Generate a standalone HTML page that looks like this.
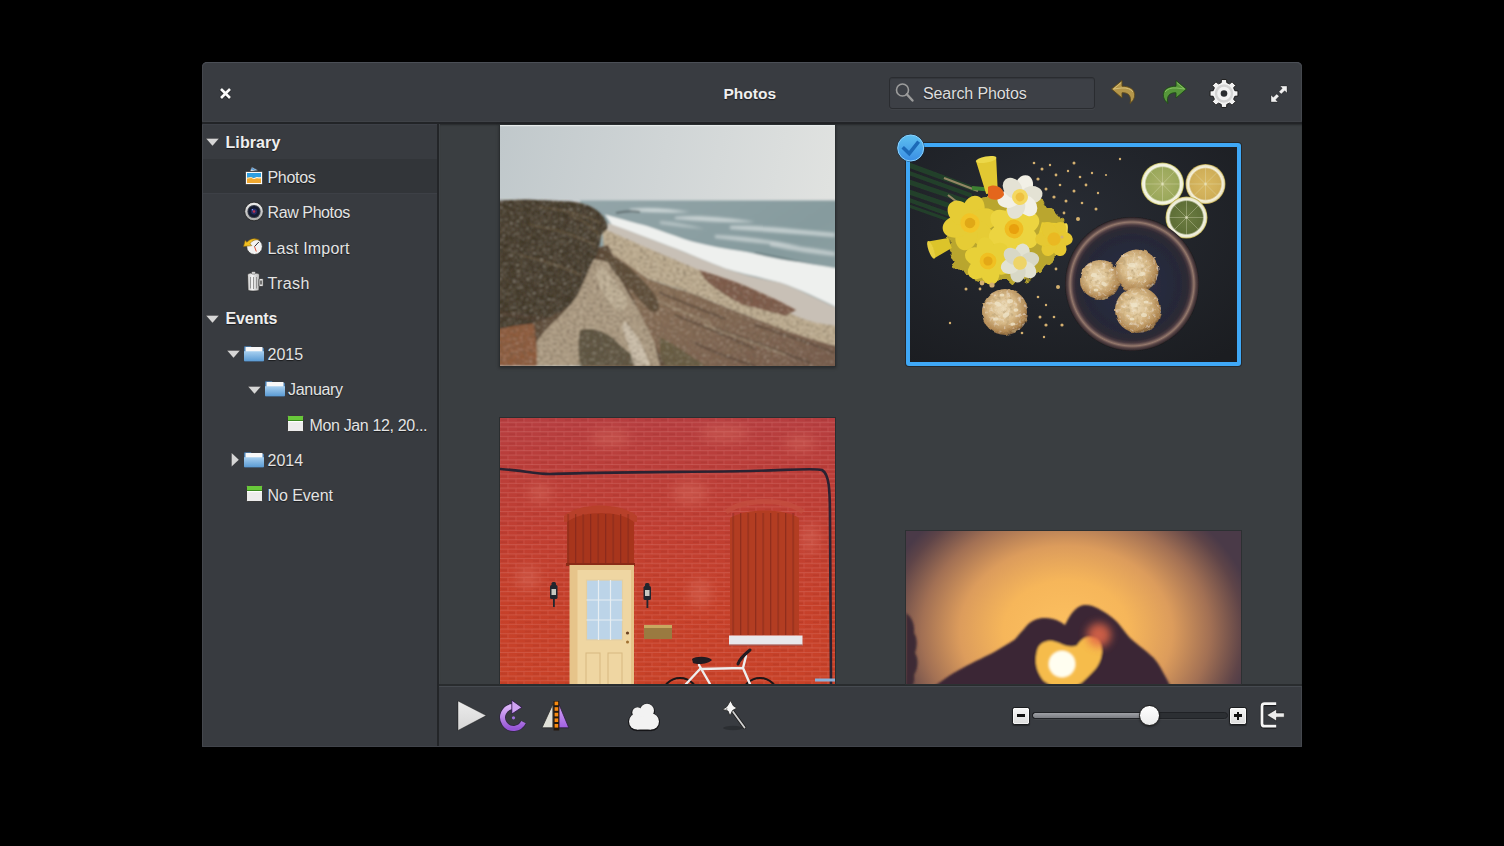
<!DOCTYPE html>
<html><head><meta charset="utf-8">
<style>
*{margin:0;padding:0;box-sizing:border-box}
html,body{width:1504px;height:846px;background:#000;overflow:hidden;font-family:"Liberation Sans",sans-serif;position:relative}
.a{position:absolute}
#win{left:202px;top:62px;width:1100px;height:685px;background:#393c41;border-radius:5px 5px 0 0;overflow:hidden}
#hb{left:202px;top:62px;width:1100px;height:60px;background:#393c41;border-top:1px solid #4b4f56;border-radius:5px 5px 0 0;box-shadow:inset 1px 0 0 #44474d,inset -1px 0 0 #44474d}
#hbl{left:202px;top:121px;width:1100px;height:1px;background:#3f4247}
#hbd{left:202px;top:122px;width:1100px;height:2px;background:#222427}
#side{left:202px;top:124px;width:235px;height:623px;background:#383b40;box-shadow:inset 1px 0 0 #44474d;border-top:1px solid #3d4047}
#sel{left:203px;top:159px;width:234px;height:35px;background:#323539;border-bottom:1px solid #3d4046}
#sep{left:437px;top:124px;width:2px;height:623px;background:#232528}
#sepl{left:439px;top:124px;width:1px;height:561px;background:#3e4245}
#content{left:440px;top:124px;width:862px;height:560px;background:#3a3e41;box-shadow:inset 0 2px 2px -1px rgba(0,0,0,.35)}
#tbd{left:439px;top:684px;width:863px;height:2px;background:#292c2e}
#tb{left:439px;top:686px;width:863px;height:61px;background:#383b40;border-top:1px solid #464a50;box-shadow:inset -1px 0 0 #44474d}
.t{position:absolute;color:#e4e4e4;font-size:16px;line-height:16px;white-space:nowrap;text-shadow:0 1px 1px rgba(0,0,0,.55)}
.b{font-weight:bold;color:#efefef;font-size:16px;line-height:16px}
svg{position:absolute;overflow:visible}
svg.ph{overflow:hidden}
</style></head><body>
<div class="a" id="win"></div>
<div class="a" id="hb"></div>
<div class="a" id="hbl"></div>
<div class="a" id="hbd"></div>
<div class="a" id="side"></div>
<div class="a" id="sel"></div>
<div class="a" id="sep"></div>
<div class="a" id="sepl"></div>
<div class="a" id="content"></div>
<div class="a" id="tbd"></div>
<div class="a" id="tb"></div>

<div class="a" style="left:202px;top:746px;width:1100px;height:1px;background:#41444b"></div>
<!-- SIDEBAR -->
<svg style="left:205px;top:137px" width="16" height="10"><path d="M1 1.5h13l-6.5 7.5z" fill="#d6d6d6" stroke="rgba(0,0,0,.3)" stroke-width=".7"/></svg>
<svg style="left:205px;top:314px" width="16" height="10"><path d="M1 1.5h13l-6.5 7.5z" fill="#d6d6d6" stroke="rgba(0,0,0,.3)" stroke-width=".7"/></svg>
<svg style="left:226px;top:349px" width="16" height="10"><path d="M1 1.5h13l-6.5 7.5z" fill="#d6d6d6" stroke="rgba(0,0,0,.3)" stroke-width=".7"/></svg>
<svg style="left:247px;top:385px" width="16" height="10"><path d="M1 1.5h13l-6.5 7.5z" fill="#d6d6d6" stroke="rgba(0,0,0,.3)" stroke-width=".7"/></svg>
<svg style="left:230px;top:452px" width="10" height="16"><path d="M1.5 0.8v14l7.5-7z" fill="#d6d6d6" stroke="rgba(0,0,0,.3)" stroke-width=".7"/></svg>
<div class="t b" style="left:225.5px;top:135.0px;letter-spacing:0.1px">Library</div>
<div class="t" style="left:267.5px;top:170.3px;letter-spacing:-0.3px">Photos</div>
<div class="t" style="left:267.5px;top:204.7px;letter-spacing:-0.4px">Raw Photos</div>
<div class="t" style="left:267.5px;top:241.0px;letter-spacing:0.2px">Last Import</div>
<div class="t" style="left:267.5px;top:276.4px;letter-spacing:0.4px">Trash</div>
<div class="t b" style="left:225.5px;top:310.7px;letter-spacing:-0.1px">Events</div>
<div class="t" style="left:267.5px;top:347.0px;letter-spacing:0px">2015</div>
<div class="t" style="left:288px;top:382.4px;letter-spacing:-0.3px">January</div>
<div class="t" style="left:309.5px;top:417.7px;letter-spacing:-0.35px">Mon Jan 12, 20...</div>
<div class="t" style="left:267.5px;top:453.1px;letter-spacing:0px">2014</div>
<div class="t" style="left:267.5px;top:488.4px;letter-spacing:-0.05px">No Event</div>
<svg width="0" height="0" style="position:absolute"><defs>
<linearGradient id="fg" x1="0" y1="0" x2="0" y2="1"><stop offset="0" stop-color="#a8d0f0"/><stop offset="1" stop-color="#5c9cd4"/></linearGradient>
</defs></svg>

<!-- photos icon -->
<svg style="left:244px;top:166px" width="20" height="20" viewBox="0 0 20 20">
 <path d="M6 5.5 L8 1.2 L13.5 4.2 Z" fill="#e8f0f8" stroke="#5a6a7a" stroke-width=".6"/>
 <path d="M7.2 3.6 L8.3 2 L12 4.2 Z" fill="#3a8ad0"/>
 <rect x="1.5" y="5.5" width="17" height="13" rx="1" fill="#fafafa" stroke="#2a2a2a" stroke-width=".7"/>
 <rect x="3" y="7" width="14" height="10" fill="#f0a830"/>
 <path d="M3 7h14v4.5c-2 .8-3-.6-5 .2s-3 .6-4-.2-3 .4-5 .2z" fill="#2e9ee0"/>
 <path d="M3 11.7c2 .2 3-1 5-.2s2 .6 4-.2 3 .6 5-.2v1.2c-2 .8-3-.6-5 .2s-3 .6-4-.2-3 .4-5 .2z" fill="#fff4d8"/>
</svg>
<!-- raw lens -->
<svg style="left:244px;top:201px" width="20" height="21" viewBox="0 0 20 21">
 <defs><linearGradient id="lrg" x1="0" y1="0" x2="0" y2="1"><stop offset="0" stop-color="#f0f0f0"/><stop offset="1" stop-color="#a8a8a8"/></linearGradient></defs>
 <circle cx="10" cy="10.5" r="9.3" fill="url(#lrg)" stroke="#1a1a1a" stroke-width=".7"/>
 <circle cx="10" cy="10.5" r="6.6" fill="#3a3e48"/>
 <circle cx="10" cy="10.5" r="5.6" fill="#141a30"/>
 <circle cx="10" cy="10.5" r="3" fill="#262e66"/>
 <circle cx="10" cy="10.5" r="1.3" fill="#c03050"/>
 <circle cx="8.4" cy="8.8" r=".7" fill="#8aa0ff"/>
</svg>
<!-- last import -->
<svg style="left:242px;top:236px" width="22" height="21" viewBox="0 0 22 21">
 <circle cx="12.5" cy="10.6" r="7.9" fill="#f2f2f2" stroke="#2a2a2a" stroke-width=".8"/>
 <path d="M12.5 10.6 L16.8 6" stroke="#1a1a1a" stroke-width=".9" fill="none"/>
 <path d="M12.5 10.6 L14.3 15.5" stroke="#e04020" stroke-width=".9" fill="none"/>
 <path d="M1.5 10.5 L3.2 4.5 L5 6.3 C8 2.5 13 1.6 17.2 4 C14 3.2 10 4.2 8 7.8 L9.8 9.6 Z" fill="#f2c020" stroke="#8a6410" stroke-width=".6" stroke-linejoin="round"/>
</svg>
<!-- trash -->
<svg style="left:245px;top:271px" width="21" height="22" viewBox="0 0 21 22">
 <defs><linearGradient id="trg" x1="0" y1="0" x2="1" y2="0"><stop offset="0" stop-color="#c8c8c8"/><stop offset=".4" stop-color="#f4f4f4"/><stop offset="1" stop-color="#b8b8b8"/></linearGradient></defs>
 <path d="M2.5 4.5 C2.5 2.5 4 2 8.5 2 C13 2 14.5 2.5 14.5 4.5 L14 18.5 C14 19.6 12.5 20 8.5 20 C4.5 20 3 19.6 3 18.5 Z" fill="url(#trg)" stroke="#2a2a2a" stroke-width=".7"/>
 <path d="M5.5 6 V17.5 M8.5 6 V18 M11.5 6 V17.5" stroke="#8a8a8a" stroke-width=".9"/>
 <rect x="6.5" y=".8" width="4" height="2.2" rx=".8" fill="#eee" stroke="#2a2a2a" stroke-width=".5"/>
 <rect x="14" y="7.5" width="4.2" height="8" rx="1" fill="#e4e4e4" stroke="#2a2a2a" stroke-width=".7"/>
 <rect x="15.2" y="9.5" width="1.6" height="4" fill="#555"/>
</svg>
<svg style="left:243px;top:344px" width="22" height="18" viewBox="0 0 22 18">
 <path d="M1 3.5c0-.8.5-1.3 1.3-1.3h5.5l1.5 1.5h10.4c.8 0 1.3.5 1.3 1.3v11.3c0 .8-.5 1.2-1.3 1.2H2.3c-.8 0-1.3-.4-1.3-1.2z" fill="#4a7eb0"/>
 <rect x="2.5" y="3" width="17" height="6" rx=".5" fill="#f8f8f8"/>
 <path d="M1 7.2h20v8.8c0 .6-.4 1-1 1H2c-.6 0-1-.4-1-1z" fill="url(#fg)"/>
</svg>
<svg style="left:264px;top:379px" width="22" height="18" viewBox="0 0 22 18">
 <path d="M1 3.5c0-.8.5-1.3 1.3-1.3h5.5l1.5 1.5h10.4c.8 0 1.3.5 1.3 1.3v11.3c0 .8-.5 1.2-1.3 1.2H2.3c-.8 0-1.3-.4-1.3-1.2z" fill="#4a7eb0"/>
 <rect x="2.5" y="3" width="17" height="6" rx=".5" fill="#f8f8f8"/>
 <path d="M1 7.2h20v8.8c0 .6-.4 1-1 1H2c-.6 0-1-.4-1-1z" fill="url(#fg)"/>
</svg>
<svg style="left:243px;top:450px" width="22" height="18" viewBox="0 0 22 18">
 <path d="M1 3.5c0-.8.5-1.3 1.3-1.3h5.5l1.5 1.5h10.4c.8 0 1.3.5 1.3 1.3v11.3c0 .8-.5 1.2-1.3 1.2H2.3c-.8 0-1.3-.4-1.3-1.2z" fill="#4a7eb0"/>
 <rect x="2.5" y="3" width="17" height="6" rx=".5" fill="#f8f8f8"/>
 <path d="M1 7.2h20v8.8c0 .6-.4 1-1 1H2c-.6 0-1-.4-1-1z" fill="url(#fg)"/>
</svg>
<svg style="left:286px;top:414px" width="19" height="19" viewBox="0 0 19 19">
 <rect x="1.5" y="1.5" width="16" height="16" rx="1" fill="#ececec" stroke="#222" stroke-width=".8"/>
 <rect x="2" y="2" width="15" height="4" fill="#68c83a"/>
 <rect x="2" y="6" width="15" height="1" fill="#3a8a20"/>
 <rect x="2" y="7" width="15" height="1.2" fill="#fff"/>
</svg>
<svg style="left:245px;top:484px" width="19" height="19" viewBox="0 0 19 19">
 <rect x="1.5" y="1.5" width="16" height="16" rx="1" fill="#ececec" stroke="#222" stroke-width=".8"/>
 <rect x="2" y="2" width="15" height="4" fill="#68c83a"/>
 <rect x="2" y="6" width="15" height="1" fill="#3a8a20"/>
 <rect x="2" y="7" width="15" height="1.2" fill="#fff"/>
</svg>

<!-- HEADERBAR -->
<div class="t b" style="left:723.5px;top:86.3px;font-size:15.5px;line-height:16px;letter-spacing:0">Photos</div>

<!-- close -->
<svg style="left:218px;top:86px" width="15" height="15" viewBox="0 0 15 15">
 <path d="M2.8 3.3L11.9 12.4M11.9 3.3L2.8 12.4" stroke="rgba(0,0,0,.5)" stroke-width="3.8"/>
 <path d="M3 3L12 12M12 3L3 12" stroke="#fafafa" stroke-width="2.7"/>
</svg>
<!-- search -->
<div class="a" style="left:889px;top:77px;width:206px;height:32px;border-radius:3px;background:#3d4046;border:1px solid #2a2c30;box-shadow:inset 0 1px 1px rgba(0,0,0,.15),0 1px 0 rgba(255,255,255,.04)"></div>
<svg style="left:893px;top:81px" width="24" height="24" viewBox="0 0 24 24">
 <circle cx="9.5" cy="9" r="6" fill="none" stroke="#9c9c9c" stroke-width="1.6"/>
 <path d="M13.8 13.3L19.5 19.5" stroke="#9c9c9c" stroke-width="2.4" stroke-linecap="round"/>
</svg>
<div class="t" style="left:923px;top:86.2px;letter-spacing:-.1px;color:#dedede">Search Photos</div>
<!-- undo -->
<svg style="left:1110px;top:79px" width="27" height="27" viewBox="0 0 27 27">
 <path d="M12 1.5 L1.5 10 L12 19 L12 13.8 C18 13.2 22 17 20 24.5 C24.5 21 25.5 16.5 24 12.8 C22.5 9 18 7.2 12 7.2 Z" fill="#b4964a" stroke="#5e4a1a" stroke-width=".9" stroke-linejoin="round"/>
 <path d="M11.2 3.5 L3.5 10 L11.2 9 C17 8.5 21 10 23 13" fill="none" stroke="#e4cf8a" stroke-width="1" opacity=".7"/>
</svg>
<!-- redo -->
<svg style="left:1161px;top:79px" width="27" height="27" viewBox="0 0 27 27">
 <path d="M15 1.5 L25.5 10 L15 19 L15 13.8 C9 13.2 5 17 7 24.5 C2.5 21 1.5 16.5 3 12.8 C4.5 9 9 7.2 15 7.2 Z" fill="#56963a" stroke="#1e4a16" stroke-width=".9" stroke-linejoin="round"/>
 <path d="M15.8 3.5 L23.5 10 L15.8 9 C10 8.5 6 10 4 13" fill="none" stroke="#9ad070" stroke-width="1" opacity=".7"/>
</svg>
<!-- gear -->
<svg style="left:1208px;top:78px" width="32" height="32" viewBox="0 0 32 32">
 <g transform="translate(16,15.5)">
  <g fill="#f2f2f2" stroke="#1c1c1c" stroke-width="1">
   <path id="gr" d="M-2.80 -10.84 L-2.59 -13.96 L2.59 -13.96 L2.80 -10.84 L5.68 -9.65 L8.04 -11.70 L11.70 -8.04 L9.65 -5.68 L10.84 -2.80 L13.96 -2.59 L13.96 2.59 L10.84 2.80 L9.65 5.68 L11.70 8.04 L8.04 11.70 L5.68 9.65 L2.80 10.84 L2.59 13.96 L-2.59 13.96 L-2.80 10.84 L-5.68 9.65 L-8.04 11.70 L-11.70 8.04 L-9.65 5.68 L-10.84 2.80 L-13.96 2.59 L-13.96 -2.59 L-10.84 -2.80 L-9.65 -5.68 L-11.70 -8.04 L-8.04 -11.70 L-5.68 -9.65 Z" stroke-linejoin="round"/>
  </g>
  <circle r="8" fill="none" stroke="#d4d4d4" stroke-width="2.4"/>
  <circle r="3.3" fill="#2a2c30"/>
 </g>
</svg>
<!-- fullscreen -->
<svg style="left:1269px;top:84px" width="20" height="20" viewBox="0 0 20 20">
 <g fill="#f0f0f0" stroke="rgba(0,0,0,.5)" stroke-width=".6">
  <path d="M11 2 L18 2 L18 9 L15.7 6.7 L12.3 10.1 L9.9 7.7 L13.3 4.3 Z"/>
  <path d="M9 18 L2 18 L2 11 L4.3 13.3 L7.7 9.9 L10.1 12.3 L6.7 15.7 Z"/>
 </g>
</svg>

<!-- PHOTOS -->
<!-- photo 1: coast -->
<div class="a" style="left:499px;top:124px;width:337px;height:243px;background:#2a2e30;box-shadow:0 1px 3px rgba(0,0,0,.35)"></div>
<svg class="ph" style="left:500px;top:125px" width="335" height="241" viewBox="0 0 335 241">
 <defs>
  <linearGradient id="p1sky" x1="0" y1="0" x2="1" y2=".15">
   <stop offset="0" stop-color="#c0c8cb"/><stop offset=".5" stop-color="#d0d5d6"/><stop offset="1" stop-color="#e0e2e0"/>
  </linearGradient>
  <linearGradient id="p1sea" x1="0" y1="0" x2="1" y2="1">
   <stop offset="0" stop-color="#93a5a8"/><stop offset=".5" stop-color="#869b9e"/><stop offset="1" stop-color="#97a8a9"/>
  </linearGradient>
  <linearGradient id="p1dune" x1="0" y1="0" x2="1" y2="1">
   <stop offset="0" stop-color="#90785e"/><stop offset=".5" stop-color="#846a54"/><stop offset="1" stop-color="#74584a"/>
  </linearGradient>
  <filter id="p1f" x="-20%" y="-50%" width="140%" height="200%"><feGaussianBlur stdDeviation="1.2 .8"/></filter>
  <filter id="p1b" x="-5%" y="-5%" width="110%" height="110%"><feGaussianBlur stdDeviation="1.1"/></filter>
  <filter id="p1tex" x="-5%" y="-5%" width="110%" height="110%">
   <feTurbulence type="fractalNoise" baseFrequency=".3 .5" numOctaves="2" seed="5" result="n"/>
   <feColorMatrix in="n" type="matrix" values="0 0 0 0 .16  0 0 0 0 .12  0 0 0 0 .08  -2.4 0 0 0 1.25" result="dark"/>
   <feComposite in="dark" in2="SourceAlpha" operator="in" result="d2"/>
   <feColorMatrix in="n" type="matrix" values="0 0 0 0 .8  0 0 0 0 .72  0 0 0 0 .58  1.4 0 0 0 -.82" result="light"/>
   <feComposite in="light" in2="SourceAlpha" operator="in" result="l2"/>
   <feMerge><feMergeNode in="SourceGraphic"/><feMergeNode in="d2"/><feMergeNode in="l2"/></feMerge>
  </filter>
 </defs>
 <rect width="335" height="241" fill="url(#p1sky)"/>
 <rect width="335" height="1.2" fill="#e6eaea"/>
 <g filter="url(#p1b)">
  <rect x="80" y="75.5" width="270" height="180" fill="url(#p1sea)"/>
  <g fill="#e2e8e8" filter="url(#p1f)">
   <path d="M130 84 C150 82 170 84 190 87 C170 88 150 87 130 86 Z" opacity=".8"/>
   <path d="M175 92 C200 90 230 93 255 97 C230 98 200 96 175 94 Z" opacity=".7"/>
   <path d="M230 101 C260 100 295 104 335 108 L335 112 C295 109 260 106 230 104 Z" opacity=".65"/>
   <path d="M215 110 C245 111 275 116 300 121 C275 120 245 117 215 113 Z" opacity=".6"/>
   <path d="M270 118 C295 120 315 124 335 127 L335 131 C315 129 295 126 270 121 Z" opacity=".6"/>
   <path d="M160 96 C175 97 190 100 205 104 C190 103 175 101 160 99 Z" opacity=".5"/>
  </g>
  <path d="M255 128 C280 132 305 138 335 146" stroke="#5a6e72" stroke-width="1.8" fill="none" opacity=".6"/>
  <path d="M116 88 C125 86 135 86 140 87" stroke="#4a5558" stroke-width="2" fill="none" opacity=".7"/>
  <!-- surf -->
  <path d="M105 89.5 C125 95 135 98 147 101 C165 107 180 113 194 117 C210 121 225 124 240.6 126 C258 129 272 133 287.5 135.6 C305 138 322 141 340 144 L340 184 C320 174 300 164 279.7 157.5 C260 152 240 148 225 143.4 C205 136 185 127 170 121.6 C150 114 130 106 112 100 Z" fill="#eef0ee"/>
  <!-- wet sand -->
  <path d="M108 98 C130 106 150 114 170 121.6 C190 129 210 138 225 143.4 C245 150 262 154 279.7 157.5 C300 164 320 176 340 184 L340 222 C320 212 300 200 285 190 C260 178 230 165 200 150 C170 138 140 124 104 108 Z" fill="#c8c0b6"/>
</g>
 <g filter="url(#p1b)"><g filter="url(#p1tex)">
  <!-- dry sand -->
  <path d="M102 103 C140 120 170 133 199 145 C230 158 260 172 285 185 C300 195 320 200 340 201 L340 225 C300 212 270 202 256 194 C230 184 210 176 199 171 C180 164 160 158 148 154 C130 142 118 132 104 125 Z" fill="#bead92"/>
  <!-- brown beach band -->
  <path d="M199 145 C215 150 230 155 242 159.5 C262 168 280 176 296 185 L285 191 C270 186 255 183 242 179.5 C225 170 212 162 205 154 Z" fill="#7e5a48"/>
  <!-- dune -->
  <path d="M100 122 C120 132 135 145 148 154 C165 160 185 166 199 171 C215 178 235 186 256 194 C280 204 305 213 340 222 L340 250 L80 250 Z" fill="url(#p1dune)"/>
  <g fill="none" stroke="#4e3c30" stroke-width="2" opacity=".65" stroke-linecap="round">
   <path d="M160 168 C180 176 200 184 225 194"/>
   <path d="M175 190 C200 200 225 210 255 224"/>
   <path d="M215 203 C240 212 275 224 310 238"/>
   <path d="M255 200 C280 208 305 216 335 228"/>
   <path d="M195 218 C215 228 235 235 255 241"/>
  </g>
  <g fill="none" stroke="#b0a086" stroke-width="2.5" opacity=".5" stroke-linecap="round">
   <path d="M150 172 C170 182 190 190 210 198"/>
   <path d="M205 200 C230 210 255 218 285 230"/>
  </g>
  <path d="M160 212 C175 220 190 230 205 241 L160 241 Z" fill="#5a5638" opacity=".7"/>
  <!-- base -->
  <path d="M-5 150 L108 120 L165 241 L-5 241 Z" fill="#5a4636"/>
  <!-- cliff dark grass -->
  <path d="M-5 75.5 L25.6 74.6 L71 76.4 C85 78 94 82 100 88 C106 94 108 100 107 104 L101 110 C100 118 99 124 96 132 C90 142 86 150 80 165 C74 178 65 186 57 188 C45 195 30 200 -5 206 Z" fill="#3e3428"/>
  <g fill="none" stroke="#6c5c40" stroke-width="2.2" opacity=".6" stroke-linecap="round">
   <path d="M40 82 C60 84 85 90 100 98"/>
   <path d="M30 100 C55 104 80 112 95 120"/>
   <path d="M20 130 C40 135 60 140 80 150"/>
   <path d="M70 90 C85 96 95 104 100 112"/>
  </g>
  <!-- grass tuft right of chalk -->
  <path d="M104 128 C120 132 140 150 155 170 C162 182 160 190 150 186 C135 170 120 152 106 140 Z" fill="#5a4a36"/>
  <!-- chalk -->
  <path d="M94 134 L108 137 C112 145 116 150 120 154 C126 165 132 175 137 182 C145 198 150 208 154 216 C156 225 158 233 160 241 L34 241 C35 232 36 224 37 216 C45 205 52 198 57 194 C65 186 72 178 77 171 C83 160 88 146 94 134 Z" fill="#ad9c84"/>
  <path d="M102 140 C110 150 116 160 126 172 C130 180 124 188 118 186 C108 178 100 165 96 150 Z" fill="#c4b69e" opacity=".8"/>
  <path d="M80 205 C92 202 105 206 115 215 C125 225 135 233 150 241 L80 241 C78 228 78 215 80 205 Z" fill="#4e4632" opacity=".85"/>
  <path d="M125 196 C135 208 145 222 150 241 L134 241 C130 226 126 212 122 202 Z" fill="#d4c8b4" opacity=".85"/>
  <path d="M-5 205 C10 201 25 199 34 199 C36 214 37 228 37 241 L-5 241 Z" fill="#8e5a3a"/>
  <path d="M-5 188 C10 190 25 193 45 194" stroke="#4a3628" stroke-width="4" fill="none" opacity=".6"/>
 </g></g>
</svg>

<!-- photo 2: cookies (selected) -->
<div class="a" style="left:905px;top:142px;width:337px;height:225px;border-radius:4px;background:rgba(0,0,0,.35)"></div>
<div class="a" style="left:906px;top:143px;width:335px;height:223px;border-radius:3px;background:#3fa8f6"></div>
<svg class="ph" style="left:910px;top:147px" width="327" height="215" viewBox="0 0 327 215">
 <defs>
  <radialGradient id="p2bg" cx=".45" cy=".35" r=".8">
   <stop offset="0" stop-color="#282c34"/><stop offset="1" stop-color="#1b1d21"/>
  </radialGradient>
  <radialGradient id="p2bowl" cx=".5" cy=".5" r=".5">
   <stop offset="0" stop-color="#2c3046"/><stop offset=".7" stop-color="#262838"/><stop offset=".84" stop-color="#2e2a34"/><stop offset=".88" stop-color="#4a3a40"/><stop offset=".925" stop-color="#94786c"/><stop offset=".955" stop-color="#5a4646"/><stop offset=".985" stop-color="#3a2e32"/><stop offset="1" stop-color="#1e1a1c"/>
  </radialGradient>
  <radialGradient id="p2ck" cx=".45" cy=".42" r=".6">
   <stop offset="0" stop-color="#ecdcba"/><stop offset=".5" stop-color="#d8ba88"/><stop offset=".85" stop-color="#b08650"/><stop offset="1" stop-color="#6e5030"/>
  </radialGradient>
  <radialGradient id="p2lem1" cx=".5" cy=".5" r=".5">
   <stop offset="0" stop-color="#e8e8c0"/><stop offset=".1" stop-color="#a8b068"/><stop offset=".76" stop-color="#9aa85a"/><stop offset=".84" stop-color="#f4f4e4"/><stop offset=".93" stop-color="#f0f0d8"/><stop offset="1" stop-color="#b0a838"/>
  </radialGradient>
  <radialGradient id="p2lem2" cx=".5" cy=".5" r=".5">
   <stop offset="0" stop-color="#f0e8c0"/><stop offset=".1" stop-color="#d8b860"/><stop offset=".76" stop-color="#cfae58"/><stop offset=".84" stop-color="#f4f0dc"/><stop offset=".93" stop-color="#ece4c0"/><stop offset="1" stop-color="#b09838"/>
  </radialGradient>
  <radialGradient id="p2lem3" cx=".5" cy=".5" r=".5">
   <stop offset="0" stop-color="#e0e0c0"/><stop offset=".1" stop-color="#6a7a40"/><stop offset=".76" stop-color="#5e6e36"/><stop offset=".84" stop-color="#f0f0e0"/><stop offset=".93" stop-color="#ecead0"/><stop offset="1" stop-color="#b8a838"/>
  </radialGradient>
  <filter id="p2b" x="-5%" y="-5%" width="110%" height="110%"><feGaussianBlur stdDeviation=".6"/></filter>
  <filter id="p2tex" x="-10%" y="-10%" width="120%" height="120%">
   <feTurbulence type="fractalNoise" baseFrequency=".24" numOctaves="2" seed="11" result="n"/>
   <feColorMatrix in="n" type="matrix" values="0 0 0 0 .5  0 0 0 0 .36  0 0 0 0 .18  -2.6 0 0 0 1.2" result="dark"/>
   <feComposite in="dark" in2="SourceAlpha" operator="in" result="d2"/>
   <feColorMatrix in="n" type="matrix" values="0 0 0 0 .93  0 0 0 0 .87  0 0 0 0 .74  1.8 0 0 0 -1.0" result="light"/>
   <feComposite in="light" in2="SourceAlpha" operator="in" result="l2"/>
   <feMerge><feMergeNode in="SourceGraphic"/><feMergeNode in="d2"/><feMergeNode in="l2"/></feMerge>
  </filter>
  <filter id="p2r2" x="-20%" y="-20%" width="140%" height="140%"><feTurbulence type="fractalNoise" baseFrequency=".08" numOctaves="2" seed="3" result="n"/><feDisplacementMap in="SourceGraphic" in2="n" scale="16" xChannelSelector="R" yChannelSelector="G"/></filter>
  <filter id="p2r" x="-10%" y="-10%" width="120%" height="120%">
   <feTurbulence type="fractalNoise" baseFrequency=".15" numOctaves="1" seed="7" result="n"/>
   <feDisplacementMap in="SourceGraphic" in2="n" scale="3.5" xChannelSelector="R" yChannelSelector="G"/>
  </filter>
  <g id="ck">
   <circle r="1" fill="url(#p2ck)"/>
  </g>
 </defs>
 <rect width="327" height="215" fill="url(#p2bg)"/>
 
 <g filter="url(#p2b)">
  <!-- stems -->
  <g stroke="#24402a" stroke-linecap="round" fill="none">
   <path d="M-4 17 L64 42" stroke-width="5"/>
   <path d="M-4 25 L60 48" stroke-width="4"/>
   <path d="M-4 34 L58 55" stroke-width="5"/>
   <path d="M-4 44 L55 64" stroke-width="5"/>
   <path d="M-4 52 L52 72" stroke-width="4"/>
   <path d="M-4 58 L50 77" stroke-width="3"/>
  </g>
  <path d="M34 31 L68 44 M38 48 L56 62" stroke="#928664" stroke-width="2.2" fill="none"/>
  <path d="M62 41 L84 43" stroke="#3e8030" stroke-width="4"/>
  <!-- daffodil mass -->
  <g>
   <path d="M40 72 C48 54 70 46 90 52 C110 44 128 52 140 62 C156 72 160 92 152 106 C142 120 126 130 112 134 C96 138 74 136 58 128 C42 118 34 96 40 72 Z" fill="#d4bc2e" opacity=".85" filter="url(#p2r2)"/>
   <g transform="translate(82 46) rotate(80)"><path d="M0 -5.9 L-34.0 -10.2 C-31.0 -5.1 -31.0 5.1 -34.0 10.2 L0 5.9 Z" fill="#e2c830"/><ellipse cx="-34.0" cy="0" rx="3.1" ry="10.5" fill="#ecd848"/></g>
   <g transform="translate(40 96) rotate(-20)"><path d="M0 -5.2 L-20.0 -9.0 C-17.0 -4.5 -17.0 4.5 -20.0 9.0 L0 5.2 Z" fill="#dcc42a"/><ellipse cx="-20.0" cy="0" rx="2.7" ry="9.3" fill="#e8d040"/></g>
   <g transform="translate(60 76) rotate(15)"><ellipse cx="0" cy="-14.0" rx="10.8" ry="14.0" fill="#e6cc34" transform="rotate(0)"/><ellipse cx="0" cy="-14.0" rx="10.8" ry="14.0" fill="#e6cc34" transform="rotate(60)"/><ellipse cx="0" cy="-14.0" rx="10.8" ry="14.0" fill="#e6cc34" transform="rotate(120)"/><ellipse cx="0" cy="-14.0" rx="10.8" ry="14.0" fill="#e6cc34" transform="rotate(180)"/><ellipse cx="0" cy="-14.0" rx="10.8" ry="14.0" fill="#e6cc34" transform="rotate(240)"/><ellipse cx="0" cy="-14.0" rx="10.8" ry="14.0" fill="#e6cc34" transform="rotate(300)"/><circle r="9.7" fill="#f2c428"/><circle r="5.3" fill="#e0a818"/></g>
   <g transform="translate(104 82) rotate(5)"><ellipse cx="0" cy="-13.5" rx="10.4" ry="13.5" fill="#ecd440" transform="rotate(0)"/><ellipse cx="0" cy="-13.5" rx="10.4" ry="13.5" fill="#ecd440" transform="rotate(60)"/><ellipse cx="0" cy="-13.5" rx="10.4" ry="13.5" fill="#ecd440" transform="rotate(120)"/><ellipse cx="0" cy="-13.5" rx="10.4" ry="13.5" fill="#ecd440" transform="rotate(180)"/><ellipse cx="0" cy="-13.5" rx="10.4" ry="13.5" fill="#ecd440" transform="rotate(240)"/><ellipse cx="0" cy="-13.5" rx="10.4" ry="13.5" fill="#ecd440" transform="rotate(300)"/><circle r="9.4" fill="#f0bc20"/><circle r="5.1" fill="#e8a010"/></g>
   <g transform="translate(130 82) rotate(15)"><path d="M0 -7.0 L24.0 -12.0 C27.0 -6.0 27.0 6.0 24.0 12.0 L0 7.0 Z" fill="#e8cc30"/><ellipse cx="24.0" cy="0" rx="3.6" ry="12.4" fill="#f2dc50"/></g>
   <g transform="translate(144 92) rotate(30)"><ellipse cx="0" cy="-9.4" rx="7.2" ry="9.4" fill="#e6c830" transform="rotate(0)"/><ellipse cx="0" cy="-9.4" rx="7.2" ry="9.4" fill="#e6c830" transform="rotate(60)"/><ellipse cx="0" cy="-9.4" rx="7.2" ry="9.4" fill="#e6c830" transform="rotate(120)"/><ellipse cx="0" cy="-9.4" rx="7.2" ry="9.4" fill="#e6c830" transform="rotate(180)"/><ellipse cx="0" cy="-9.4" rx="7.2" ry="9.4" fill="#e6c830" transform="rotate(240)"/><ellipse cx="0" cy="-9.4" rx="7.2" ry="9.4" fill="#e6c830" transform="rotate(300)"/><circle r="6.5" fill="#eab820"/></g>
   <g transform="translate(78 114) rotate(-10)"><ellipse cx="0" cy="-12.0" rx="9.2" ry="12.0" fill="#e8d038" transform="rotate(0)"/><ellipse cx="0" cy="-12.0" rx="9.2" ry="12.0" fill="#e8d038" transform="rotate(60)"/><ellipse cx="0" cy="-12.0" rx="9.2" ry="12.0" fill="#e8d038" transform="rotate(120)"/><ellipse cx="0" cy="-12.0" rx="9.2" ry="12.0" fill="#e8d038" transform="rotate(180)"/><ellipse cx="0" cy="-12.0" rx="9.2" ry="12.0" fill="#e8d038" transform="rotate(240)"/><ellipse cx="0" cy="-12.0" rx="9.2" ry="12.0" fill="#e8d038" transform="rotate(300)"/><circle r="8.3" fill="#f0c020"/><circle r="4.6" fill="#e4a818"/></g>
   <g transform="translate(110 50) rotate(20)"><ellipse cx="0" cy="-11.4" rx="8.8" ry="11.4" fill="#f2f0e6" transform="rotate(0)"/><ellipse cx="0" cy="-11.4" rx="8.8" ry="11.4" fill="#e4e2d4" transform="rotate(60)"/><ellipse cx="0" cy="-11.4" rx="8.8" ry="11.4" fill="#f2f0e6" transform="rotate(120)"/><ellipse cx="0" cy="-11.4" rx="8.8" ry="11.4" fill="#e4e2d4" transform="rotate(180)"/><ellipse cx="0" cy="-11.4" rx="8.8" ry="11.4" fill="#f2f0e6" transform="rotate(240)"/><ellipse cx="0" cy="-11.4" rx="8.8" ry="11.4" fill="#e4e2d4" transform="rotate(300)"/><circle r="7.9" fill="#f4d860"/><circle r="4.4" fill="#eec040"/></g>
   <g transform="translate(110 116) rotate(12)"><ellipse cx="0" cy="-9.9" rx="7.6" ry="9.9" fill="#e2e2d2" transform="rotate(0)"/><ellipse cx="0" cy="-9.9" rx="7.6" ry="9.9" fill="#d8d8c6" transform="rotate(60)"/><ellipse cx="0" cy="-9.9" rx="7.6" ry="9.9" fill="#e2e2d2" transform="rotate(120)"/><ellipse cx="0" cy="-9.9" rx="7.6" ry="9.9" fill="#d8d8c6" transform="rotate(180)"/><ellipse cx="0" cy="-9.9" rx="7.6" ry="9.9" fill="#e2e2d2" transform="rotate(240)"/><ellipse cx="0" cy="-9.9" rx="7.6" ry="9.9" fill="#d8d8c6" transform="rotate(300)"/><circle r="6.8" fill="#eed468"/></g>
   <path d="M78 40 C84 36 94 40 94 48 C90 54 82 54 78 50 Z" fill="#e4661e"/>
  </g>
  <!-- lemons -->
  <circle cx="252.5" cy="37" r="21.5" fill="url(#p2lem1)"/>
  <circle cx="295.5" cy="37" r="20" fill="url(#p2lem2)"/>
  <circle cx="276.5" cy="70.5" r="21" fill="url(#p2lem3)"/>
  <g stroke="#e8e8c8" stroke-width=".6" opacity=".55">
   <path d="M252.5 19 V55 M235 37 H270 M240 24 L265 50 M265 24 L240 50"/>
   <path d="M295.5 21 V53 M279.5 37 H311.5 M284.5 26 L306.5 48 M306.5 26 L284.5 48"/>
   <path d="M276.5 53 V88 M259 70.5 H294 M264 58 L289 83 M289 58 L264 83"/>
  </g>
  <!-- bowl -->
  <circle cx="222" cy="137" r="67" fill="url(#p2bowl)"/>
  <g filter="url(#p2r)"><g filter="url(#p2tex)">
   <circle cx="190" cy="133" r="20" fill="url(#p2ck)"/>
   <circle cx="227" cy="124" r="21.5" fill="url(#p2ck)"/>
   <circle cx="228" cy="163" r="23" fill="url(#p2ck)"/>
   <circle cx="95" cy="165" r="23" fill="url(#p2ck)"/>
  </g></g>
  <g fill="#efe4c8" opacity=".8">
   <ellipse cx="88" cy="157" rx="3.5" ry="2.2" transform="rotate(20 88 157)"/><ellipse cx="100" cy="154" rx="3" ry="2"/><ellipse cx="96" cy="168" rx="3.5" ry="2.2" transform="rotate(-30 96 168)"/><ellipse cx="106" cy="163" rx="2.5" ry="1.8"/><ellipse cx="86" cy="172" rx="2.8" ry="1.8"/><ellipse cx="92" cy="148" rx="2.5" ry="1.6"/><ellipse cx="103" cy="177" rx="2.5" ry="1.6"/>
   <ellipse cx="184" cy="128" rx="3" ry="2"/><ellipse cx="194" cy="137" rx="3" ry="2" transform="rotate(30 194 137)"/><ellipse cx="186" cy="143" rx="2.5" ry="1.6"/>
   <ellipse cx="222" cy="118" rx="3.5" ry="2.2"/><ellipse cx="232" cy="127" rx="3" ry="2" transform="rotate(-20 232 127)"/><ellipse cx="220" cy="131" rx="2.5" ry="1.6"/>
   <ellipse cx="224" cy="158" rx="3.5" ry="2.2"/><ellipse cx="234" cy="168" rx="3" ry="2"/><ellipse cx="222" cy="172" rx="2.5" ry="1.6"/><ellipse cx="236" cy="155" rx="2.5" ry="1.6"/>
  </g>
  <!-- crumbs -->
  <g fill="#d4b070">
   <circle cx="124" cy="16" r="1.3"/><circle cx="132" cy="22" r="1.5"/><circle cx="140" cy="18" r="1.2"/><circle cx="128" cy="32" r="1.6"/><circle cx="146" cy="28" r="1.4"/><circle cx="136" cy="42" r="1.5"/><circle cx="150" cy="38" r="1.3"/><circle cx="144" cy="50" r="1.6"/><circle cx="158" cy="24" r="1.2"/><circle cx="164" cy="16" r="1.5"/><circle cx="170" cy="30" r="1.3"/><circle cx="164" cy="44" r="1.5"/><circle cx="176" cy="38" r="1.4"/><circle cx="182" cy="26" r="1.2"/><circle cx="156" cy="54" r="1.5"/><circle cx="172" cy="56" r="1.3"/><circle cx="188" cy="46" r="1.2"/><circle cx="186" cy="62" r="1.5"/><circle cx="196" cy="28" r="1.1"/><circle cx="210" cy="12" r="1.2"/><circle cx="168" cy="72" r="2"/><circle cx="154" cy="66" r="1.4"/>
   <circle cx="152" cy="90" r="1.6"/><circle cx="146" cy="122" r="1.4"/><circle cx="128" cy="150" r="1.3"/><circle cx="56" cy="142" r="1.5"/><circle cx="70" cy="142" r="1.4"/><circle cx="82" cy="138" r="2.6"/><circle cx="72" cy="136" r="2.4"/><circle cx="40" cy="176" r="1.2"/><circle cx="130" cy="170" r="1.5"/><circle cx="136" cy="178" r="1.6"/><circle cx="144" cy="170" r="1.3"/><circle cx="134" cy="190" r="1.2"/><circle cx="112" cy="186" r="1.3"/><circle cx="148" cy="140" r="2"/><circle cx="136" cy="158" r="1.2"/><circle cx="152" cy="178" r="1.6"/>
  </g>
 </g>
</svg>
<!-- check badge -->
<svg style="left:895px;top:133px" width="31" height="31" viewBox="0 0 31 31">
 <defs><linearGradient id="ckg" x1="0" y1="0" x2="0" y2="1"><stop offset="0" stop-color="#5ec0f0"/><stop offset="1" stop-color="#3a8ee4"/></linearGradient></defs>
 <circle cx="15.7" cy="15" r="13.8" fill="#0c2a48" opacity=".8"/>
 <circle cx="15.7" cy="15" r="13" fill="url(#ckg)" stroke="#8cd4ff" stroke-width="1"/>
 <path d="M9 15.5 L14.2 20.5 L22.5 10" fill="none" stroke="#1c6ab8" stroke-width="3.6" stroke-linecap="square"/>
</svg>

<!-- photo 3: red brick -->
<div class="a" style="left:499px;top:417px;width:337px;height:268px;background:#2a2e30"></div>
<svg class="ph" style="left:500px;top:418px" width="335" height="266" viewBox="0 0 335 266">
 <defs>
  <linearGradient id="p3wall" x1="0" y1="0" x2="0" y2="1">
   <stop offset="0" stop-color="#b63e40"/><stop offset=".35" stop-color="#be3e34"/><stop offset=".7" stop-color="#c6402a"/><stop offset="1" stop-color="#c84228"/>
  </linearGradient>
  <pattern id="brick" width="16" height="9.4" patternUnits="userSpaceOnUse">
   <path d="M0 4.4 H16 M0 9.1 H16" stroke="#e8a098" stroke-width=".9" opacity=".28"/>
   <path d="M8 0 V4.4 M0 4.7 V9.1 M16 4.7 V9.1" stroke="#e8a098" stroke-width=".8" opacity=".18"/>
   <path d="M1 2 H7 M9 6.8 H15" stroke="#7a2018" stroke-width="1.6" opacity=".12"/>
  </pattern>
  <pattern id="plank" width="7.5" height="10" patternUnits="userSpaceOnUse">
   <rect x="0" width="1.3" height="10" fill="#7a2418" opacity=".6"/>
  </pattern>
  <filter id="p3b" x="-5%" y="-5%" width="110%" height="110%"><feGaussianBlur stdDeviation=".6"/></filter>
  <filter id="p3b2" x="-50%" y="-50%" width="200%" height="200%"><feGaussianBlur stdDeviation="6"/></filter>
 </defs>
 <rect width="335" height="266" fill="url(#p3wall)"/>
 <rect width="335" height="266" fill="url(#brick)"/>
 <g filter="url(#p3b2)" fill="#e07a6a" opacity=".35">
  <ellipse cx="110" cy="20" rx="20" ry="8"/><ellipse cx="225" cy="15" rx="25" ry="8"/><ellipse cx="300" cy="25" rx="15" ry="8"/><ellipse cx="40" cy="75" rx="12" ry="10"/>
  <ellipse cx="190" cy="75" rx="18" ry="12"/><ellipse cx="28" cy="160" rx="12" ry="12"/><ellipse cx="200" cy="175" rx="12" ry="15"/><ellipse cx="310" cy="120" rx="10" ry="15"/>
 </g>
 <g filter="url(#p3b)">
  <!-- cable -->
  <path d="M0 51 C20 52 35 56 50 56 C100 54 200 54 250 53 C290 52 315 50 322 52 C329 56 330 70 330 100 L331 266" stroke="#2a2230" stroke-width="2.6" fill="none"/>
  <!-- left arch + planks -->
  <path d="M64 98 C80 84 120 84 137 98 L137 104 L64 104 Z" fill="#b8402a"/>
  <path d="M67 104 C82 92 120 92 134 104 L134 146 L67 146 Z" fill="#a8351f"/>
  <rect x="67" y="96" width="67" height="50" fill="url(#plank)"/>
  <rect x="66" y="145" width="69" height="3" fill="#8a2a18"/>
  <!-- door -->
  <rect x="69.5" y="147" width="64.5" height="120" fill="#e6c48a"/>
  <rect x="77.5" y="152" width="53.5" height="115" fill="#efd6a2"/>
  <rect x="86.5" y="162" width="36" height="60" fill="#bcd4e8" stroke="#e6cfa0" stroke-width="1.2"/>
  <path d="M98.5 162 V222 M110.5 162 V222 M86.5 182 H122.5 M86.5 202 H122.5" stroke="#e8eef2" stroke-width="1.2"/>
  <rect x="86" y="235" width="14" height="32" fill="none" stroke="#d8b880" stroke-width="1"/>
  <rect x="108" y="235" width="14" height="32" fill="none" stroke="#d8b880" stroke-width="1"/>
  <circle cx="127.5" cy="215" r="1.6" fill="#6a4020"/>
  <circle cx="127.5" cy="224" r="1.5" fill="#a07030"/>
  <!-- lamps -->
  <g fill="#24262e">
   <rect x="50" y="167" width="7.5" height="14" rx="1.5"/><rect x="51.5" y="164" width="4.5" height="4" rx="1.5"/><rect x="53" y="180" width="1.8" height="9"/>
   <rect x="143.5" y="168" width="7.5" height="14" rx="1.5"/><rect x="145" y="165" width="4.5" height="4" rx="1.5"/><rect x="146.5" y="181" width="1.8" height="9"/>
  </g>
  <rect x="51.5" y="171" width="4.5" height="6" fill="#c8c8c0"/>
  <rect x="145" y="172" width="4.5" height="6" fill="#c8c8c0"/>
  <!-- mailbox -->
  <rect x="144" y="207" width="28" height="14" fill="#9a7a40"/>
  <rect x="144" y="207" width="28" height="3" fill="#c8a860"/>
  <!-- shutter -->
  <path d="M230 100 C245 90 285 90 299 100 L299 217 L230 217 Z" fill="#b33d24"/>
  <rect x="230" y="95" width="69" height="122" fill="url(#plank)"/>
  <path d="M226 94 C245 80 285 80 303 94" stroke="#c45040" stroke-width="5" fill="none" opacity=".7"/>
  <rect x="229" y="217.5" width="73.5" height="10" fill="#e8e8ec"/>
  <rect x="229" y="226.5" width="73.5" height="1.2" fill="#9a3a30"/>
  <!-- bike -->
  <g fill="none" stroke-linecap="round">
   <circle cx="180" cy="278" r="18" stroke="#1a1418" stroke-width="2.2"/>
   <circle cx="260" cy="278" r="18" stroke="#1a1418" stroke-width="2.2"/>
   <path d="M199 247 L210 266 M200 251 L243 250 L250 266 M243 250 L246 238 M186 266 L200 251" stroke="#eeeeee" stroke-width="2.4"/>
  </g>
  <path d="M192 241 C196 238 208 238 212 242 C208 246 198 247 193 245 Z" fill="#221a20"/>
  <path d="M238 246 C240 240 245 236 250 232" stroke="#221a20" stroke-width="3" fill="none" stroke-linecap="round"/>
  <path d="M315 262 H335" stroke="#8ab0d8" stroke-width="3"/>
 </g>
</svg>

<!-- photo 4: sunset heart -->
<div class="a" style="left:905px;top:530px;width:337px;height:155px;background:#2c3032"></div>
<svg class="ph" style="left:906px;top:531px" width="335" height="153" viewBox="0 0 335 153">
 <defs>
  <radialGradient id="p4bg" cx="160" cy="100" r="190" gradientUnits="userSpaceOnUse" gradientTransform="translate(160 100) scale(1 .8) translate(-160 -100)">
   <stop offset="0" stop-color="#fcc060"/><stop offset=".33" stop-color="#f6b65a"/><stop offset=".56" stop-color="#dc9c5c"/><stop offset=".76" stop-color="#a27054"/><stop offset=".93" stop-color="#5e4448"/><stop offset="1" stop-color="#4a3a48"/>
  </radialGradient>
  <radialGradient id="p4sun" cx=".5" cy=".5" r=".5">
   <stop offset="0" stop-color="#fffff0"/><stop offset=".55" stop-color="#fff8d0"/><stop offset=".75" stop-color="#ffe890"/><stop offset="1" stop-color="#f8c050" stop-opacity="0"/>
  </radialGradient>
  <filter id="p4b" x="-10%" y="-10%" width="120%" height="120%"><feGaussianBlur stdDeviation="1"/></filter>
  <filter id="p4b2" x="-50%" y="-50%" width="200%" height="200%"><feGaussianBlur stdDeviation="4"/></filter>
 </defs>
 <rect width="335" height="153" fill="url(#p4bg)"/>
 <g filter="url(#p4b)">
  <path d="M29 156 L29.5 154.2 C40 147 48 141 55.8 137.4 C68 131 76 127 84.5 123 C95 117 102 113 108.5 108.7 C112 105 115 101 118 98 C121 94 124 91 127.6 89.5 C132 87.5 136 87 139.6 87.1 C144 87.3 148 88 151.5 89.5 C155 91 157 92.5 159 94 C161 90 163 86 166 82 C170 77 174 74.5 177.9 74 C183 73.5 188 75 192.2 77.6 C198 81 203 84 206.6 87.1 C210 90 212 92 213.8 94.3 C217 98.5 220 102 223.3 106.3 C228 111 233 114.5 237.7 118.2 C241 121 244 123.5 247.3 126.6 C249 128.5 250.5 130.5 252 132.6 C256 139 260 147 265 156 Z" fill="#3a2636"/>
  <path d="M0 82 C6 86 9 94 8 102 C12 108 11 116 9 122 C13 128 12 138 8 144 C9 150 7 154 6 156 L0 156 Z" fill="#3e2c34"/>
  <path d="M170.7 114.7 C174 110 177 107 180.3 106.3 C185 105.5 189 106 192.2 108.7 C195 112 196.5 117 195.8 123 C195 129 193 133 189.8 137.4 C185 143 180 148 175.5 151.7 C172 154 169 156 165.9 157 L151.5 157 C146 155 141 152.5 137.2 149.4 C133 144 130.5 138 130 132.6 C129.5 126 130.5 120 132.4 115.9 C135 112 138 110.5 142 109.9 C147 109.5 152 111.5 156.3 113.5 C161 115.5 166 116 170.7 114.7 Z" fill="#f6bc4c"/>
  <circle cx="156" cy="133" r="16" fill="url(#p4sun)"/>
  <circle cx="156" cy="133" r="13" fill="#fffef0"/>
 </g>
 <circle cx="193" cy="104" r="12" fill="#e4684a" opacity=".85" filter="url(#p4b2)"/>
</svg>

<!-- TOOLBAR -->
<!-- play -->
<svg style="left:456px;top:699px" width="32" height="34" viewBox="0 0 32 34">
 <defs><linearGradient id="plg" x1="0" y1="0" x2="0" y2="1"><stop offset="0" stop-color="#ececec"/><stop offset="1" stop-color="#d6d6d6"/></linearGradient></defs>
 <path d="M2 2 L30.2 16.6 L2 31.4 Z" fill="url(#plg)" stroke="rgba(0,0,0,.45)" stroke-width=".8" stroke-linejoin="round"/>
</svg>
<!-- rotate -->
<svg style="left:498px;top:699px" width="30" height="34" viewBox="0 0 30 34">
 <defs><linearGradient id="rtg" x1="0" y1="0" x2="0" y2="1"><stop offset="0" stop-color="#dcb4f8"/><stop offset="1" stop-color="#9656d6"/></linearGradient></defs>
 <path d="M14.5 7.5 A11 11 0 1 0 25.5 23.2" fill="none" stroke="#2a1048" stroke-width="6.4" opacity=".6"/>
 <path d="M14.5 7.5 A11 11 0 1 0 25.5 23.2" fill="none" stroke="url(#rtg)" stroke-width="5"/>
 <path d="M13.8 1.2 L23.8 8.4 L13.8 15 Z" fill="#cfa2f4" stroke="#2a1048" stroke-width=".8" stroke-linejoin="round"/>
 <circle cx="15.5" cy="18.8" r="1.6" fill="#a070e0"/>
</svg>
<!-- flip -->
<svg style="left:540px;top:699px" width="32" height="34" viewBox="0 0 32 34">
 <defs><linearGradient id="flg" x1="0" y1="0" x2="0" y2="1"><stop offset="0" stop-color="#d8a8f8"/><stop offset="1" stop-color="#a060e0"/></linearGradient></defs>
 <path d="M12.9 5 L12.9 28.8 L2 28.8 Z" fill="#e0e0d8" stroke="#2a2a2a" stroke-width=".8" stroke-linejoin="round"/>
 <path d="M18.9 5 L18.9 28.8 L28.8 28.8 Z" fill="url(#flg)" stroke="#2a1a3a" stroke-width=".8" stroke-linejoin="round"/>
 <rect x="13.6" y="2" width="5.6" height="29.5" fill="#24180e"/>
 <rect x="14.6" y="2.6" width="3.6" height="3.6" fill="#f88a10"/><rect x="14.6" y="8.2" width="3.6" height="3.6" fill="#f88a10"/><rect x="14.6" y="13.8" width="3.6" height="3.6" fill="#f88a10"/><rect x="14.6" y="19.4" width="3.6" height="3.6" fill="#f88a10"/><rect x="14.6" y="25.0" width="3.6" height="3.6" fill="#f88a10"/>
</svg>
<!-- cloud -->
<svg style="left:620px;top:698px" width="44" height="36" viewBox="0 0 44 36">
 <defs><linearGradient id="clg" x1="0" y1="0" x2="0" y2="1"><stop offset="0" stop-color="#f4f4f4"/><stop offset="1" stop-color="#e6e6e6"/></linearGradient></defs>
 <g transform="translate(0 .6)" opacity=".85"><circle cx="17" cy="23.5" r="9" fill="#0e0e10"/><circle cx="31" cy="23.5" r="9" fill="#0e0e10"/><rect x="16" y="14.5" width="16" height="18" fill="#0e0e10"/><circle cx="17.5" cy="14.5" r="6.2" fill="#0e0e10"/><circle cx="27" cy="12.799999999999955" r="8" fill="#0e0e10"/></g>
 <g><circle cx="17" cy="23.5" r="8" fill="#f2f2f2"/><circle cx="31" cy="23.5" r="8" fill="#f2f2f2"/><rect x="17" y="15.5" width="14" height="16" fill="#f2f2f2"/><circle cx="17.5" cy="14.5" r="5.2" fill="#f2f2f2"/><circle cx="27" cy="12.799999999999955" r="7" fill="#f2f2f2"/></g>
</svg>
<!-- enhance -->
<svg style="left:718px;top:697px" width="32" height="36" viewBox="0 0 32 36">
 <ellipse cx="15" cy="31" rx="10" ry="2.2" fill="rgba(0,0,0,.22)"/>
 <path d="M13 12 L26.5 30.5" stroke="#1e1e1e" stroke-width="3.4" stroke-linecap="round"/>
 <path d="M13 12 L26.5 30.5" stroke="#d0d0d0" stroke-width="1.8" stroke-linecap="round"/>
 <path d="M12.5 3.5 L15.5 9 L19 11 L14.5 13.5 L12 19 L10 14 L4.5 12.5 L9 9.5 Z" fill="#f6f6f6" stroke="#2a2a2a" stroke-width=".9" stroke-linejoin="round"/>
 <path d="M7 12 L9.5 11 L9 13.5 Z" fill="#8a8a8a"/>
</svg>
<!-- zoom out btn -->
<div class="a" style="left:1012px;top:707px;width:18px;height:18px;border-radius:2.5px;background:linear-gradient(#f6f6f6,#dcdcdc);border:1px solid #1a1c1e;box-shadow:0 1px 1px rgba(0,0,0,.35),inset 0 0 0 1px rgba(255,255,255,.6)"></div>
<div class="a" style="left:1017px;top:714px;width:8px;height:3px;background:#101010"></div>
<!-- slider -->
<div class="a" style="left:1032px;top:712px;width:196px;height:7px;border-radius:4px;background:#2c2f33;border:1px solid #202226;box-shadow:0 1px 0 rgba(255,255,255,.05)"></div>
<div class="a" style="left:1032px;top:712px;width:119px;height:7px;border-radius:4px 0 0 4px;background:linear-gradient(#9fa1a6,#7a7c82);border:1px solid #202226;border-right:none"></div>
<div class="a" style="left:1139px;top:705px;width:21px;height:21px;border-radius:50%;background:linear-gradient(#ffffff,#ececec);border:1px solid #1e1e1e;box-shadow:0 1px 2px rgba(0,0,0,.4)"></div>
<!-- zoom in btn -->
<div class="a" style="left:1229px;top:707px;width:18px;height:18px;border-radius:2.5px;background:linear-gradient(#f6f6f6,#dcdcdc);border:1px solid #1a1c1e;box-shadow:0 1px 1px rgba(0,0,0,.35),inset 0 0 0 1px rgba(255,255,255,.6)"></div>
<div class="a" style="left:1234px;top:714px;width:8px;height:2.6px;background:#101010"></div>
<div class="a" style="left:1236.7px;top:711.5px;width:2.6px;height:8px;background:#101010"></div>
<!-- exit -->
<svg style="left:1257px;top:700px" width="30" height="31" viewBox="0 0 30 31">
 <path d="M19.2 3.7 H7.5 Q5 3.7 5 6.2 V23.7 Q5 26.2 7.5 26.2 H19.2" stroke="rgba(0,0,0,.55)" stroke-width="4.2" fill="none" transform="translate(0 .4)"/>
 <path d="M19.2 3.7 H7.5 Q5 3.7 5 6.2 V23.7 Q5 26.2 7.5 26.2 H19.2" stroke="#f6f6f6" stroke-width="2.8" fill="none"/>
 <path d="M9.8 15.1 L19.5 9.2 V13 H27.3 V17.2 H19.5 V21 Z" fill="#ececec" stroke="rgba(0,0,0,.55)" stroke-width=".9" stroke-linejoin="round"/>
</svg>

</body></html>
